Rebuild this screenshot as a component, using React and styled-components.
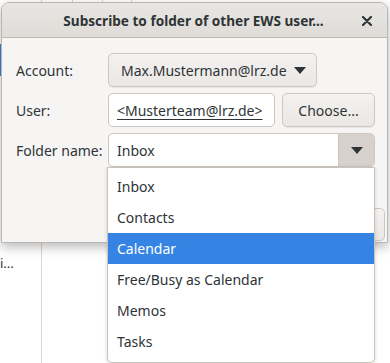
import styled, { createGlobalStyle } from "styled-components"

const GlobalStyle = createGlobalStyle`
    html, body {
        margin: 0;
        padding: 0;
        background: #ffffff;
    }
    * {
        box-sizing: border-box;
    }
`

const Desktop = styled.div`
    position: relative;
    width: 390px;
    height: 363px;
    overflow: hidden;
    background: #ffffff;
    font-family: "Noto Sans", "DejaVu Sans", sans-serif;
    font-size: 14px;
    color: #2e3436;
`

const BackApp = styled.div`
    display: flex;
    height: 100%;
`

const Sidebar = styled.div`
    width: 42px;
    flex-shrink: 0;
    border-right: 1px solid #d8d4d0;
    display: flex;
    flex-direction: column;
`

const SideRow = styled.div`
    height: ${props => props.$h}px;
    background: ${props => props.$selected ? '#3584e4' : 'transparent'};
    font-size: 13px;
    line-height: ${props => props.$h}px;
    color: #2e3436;
    white-space: nowrap;
`

const BackMain = styled.div`
    flex-grow: 1;
    display: flex;
    flex-direction: column;
`

const HeaderCells = styled.div`
    display: flex;
    height: 12px;
`

const HeaderCell = styled.div`
    width: ${props => props.$w}px;
    border-right: 1px solid #d8d4d0;
`

const Window = styled.div`
    position: absolute;
    left: 1px;
    top: 2px;
    width: 387px;
    height: 241px;
    display: flex;
    flex-direction: column;
    background: #f6f5f4;
    border: 1px solid #bdb6b0;
    border-radius: 8px 8px 0 0;
    box-shadow: 0 4px 12px rgba(0, 0, 0, 0.28);
`

const TitleBar = styled.div`
    position: relative;
    height: 35px;
    flex-shrink: 0;
    display: flex;
    align-items: center;
    justify-content: center;
    background: linear-gradient(#e8e6e3, #dfdcd8);
    border-bottom: 1px solid #bfb8b1;
    border-radius: 7px 7px 0 0;
`

const Title = styled.h1`
    margin: 0 0 0 -2px;
    font-size: 13.6px;
    font-weight: bold;
    color: #2e3436;
`

const CloseButton = styled.button`
    position: absolute;
    right: 10px;
    top: 8px;
    width: 20px;
    height: 20px;
    padding: 0;
    border: none;
    background: none;
    display: flex;
    align-items: center;
    justify-content: center;
`

const Body = styled.div`
    flex-grow: 1;
    display: flex;
    flex-direction: column;
    padding: 15px 12px 0 14px;
`

const Form = styled.div`
    display: grid;
    grid-template-columns: 84px 1fr;
    column-gap: 8px;
    row-gap: 6px;
    grid-auto-rows: 34px;
    align-items: center;
`

const Label = styled.label`
    white-space: nowrap;
    color: #2e3436;
`

const ComboButton = styled.button`
    justify-self: start;
    height: 34px;
    display: flex;
    align-items: center;
    gap: 7px;
    padding: 0 10px 0 12px;
    font: inherit;
    color: #2e3436;
    background: linear-gradient(#f4f2f1, #eae7e4);
    border: 1px solid #cdc7c2;
    border-radius: 5px;
    box-shadow: 0 1px 0 rgba(0, 0, 0, 0.05);
`

const FieldRow = styled.div`
    display: flex;
    gap: 7px;
    height: 34px;
`

const Entry = styled.div`
    flex-grow: 1;
    display: flex;
    align-items: center;
    padding: 0 8px;
    background: #ffffff;
    border: 1px solid #cdc7c2;
    border-radius: 5px;
    text-decoration: ${props => props.$underline ? 'underline' : 'none'};
    text-underline-offset: 3px;
    white-space: nowrap;
    overflow: hidden;
`

const PushButton = styled.button`
    width: ${props => props.$w}px;
    height: ${props => props.$h || 34}px;
    flex-shrink: 0;
    font: inherit;
    color: #2e3436;
    background: linear-gradient(#f4f2f1, #eae7e4);
    border: 1px solid #cdc7c2;
    border-radius: 5px;
    box-shadow: 0 1px 0 rgba(0, 0, 0, 0.05);
`

const ComboEntry = styled.div`
    position: relative;
    height: 34px;
    display: flex;
    background: #ffffff;
    border: 1px solid #cdc7c2;
    border-radius: 5px;
`

const ComboText = styled.div`
    flex-grow: 1;
    display: flex;
    align-items: center;
    padding: 0 8px;
`

const ArrowPart = styled.div`
    width: 36px;
    display: flex;
    align-items: center;
    justify-content: center;
    background: #d6d1cd;
    border-left: 1px solid #cdc7c2;
    border-radius: 0 4px 4px 0;
`

const Popup = styled.ul`
    position: absolute;
    left: -2px;
    top: 33px;
    width: 268px;
    margin: 0;
    padding: 3px 0 5px;
    list-style: none;
    background: #ffffff;
    border: 1px solid #c9c3bd;
    border-radius: 0 0 5px 5px;
    box-shadow: 0 1px 4px rgba(0, 0, 0, 0.15);
    z-index: 2;
`

const Item = styled.li`
    height: 31px;
    display: flex;
    align-items: center;
    padding-left: 9px;
    color: ${props => props.$active ? '#ffffff' : '#2e3436'};
    background: ${props => props.$active ? '#3584e4' : 'transparent'};
`

const ActionBar = styled.div`
    margin-top: auto;
    display: flex;
    justify-content: flex-end;
    padding: 0 0 1px 0;
    margin-right: -10px;
`

const Arrow = () => (
    <svg width="12" height="7" viewBox="0 0 12 7">
        <polygon points="0,0 12,0 6,7" fill="#2e3436" />
    </svg>
)

const CloseIcon = () => (
    <svg width="10" height="10" viewBox="0 0 10 10">
        <path d="M1 1 L9 9 M9 1 L1 9" stroke="#2e3436" strokeWidth="2.2" strokeLinecap="round" />
    </svg>
)

const folders = ['Inbox', 'Contacts', 'Calendar', 'Free/Busy as Calendar', 'Memos', 'Tasks']

const App = () => {
    return (
        <Desktop>
            <GlobalStyle />
            <BackApp>
                <Sidebar>
                    <SideRow $h={44} />
                    <SideRow $h={32} $selected />
                    <SideRow $h={176} />
                    <SideRow $h={22}>i...</SideRow>
                </Sidebar>
                <BackMain>
                    <HeaderCells>
                        <HeaderCell $w={31} />
                        <HeaderCell $w={30} />
                        <HeaderCell $w={29} />
                    </HeaderCells>
                </BackMain>
            </BackApp>

            <Window>
                <TitleBar>
                    <Title>Subscribe to folder of other EWS user...</Title>
                    <CloseButton><CloseIcon /></CloseButton>
                </TitleBar>
                <Body>
                    <Form>
                        <Label>Account:</Label>
                        <ComboButton>
                            Max.Mustermann@lrz.de
                            <Arrow />
                        </ComboButton>

                        <Label>User:</Label>
                        <FieldRow>
                            <Entry $underline>&lt;Musterteam@lrz.de&gt;</Entry>
                            <PushButton $w={93}>Choose...</PushButton>
                        </FieldRow>

                        <Label>Folder name:</Label>
                        <ComboEntry>
                            <ComboText>Inbox</ComboText>
                            <ArrowPart><Arrow /></ArrowPart>
                            <Popup>
                                {folders.map(f => (
                                    <Item key={f} $active={f === 'Calendar'}>{f}</Item>
                                ))}
                            </Popup>
                        </ComboEntry>
                    </Form>
                    <ActionBar>
                        <PushButton $w={80} $h={33}>OK</PushButton>
                    </ActionBar>
                </Body>
            </Window>
        </Desktop>
    )
}

export default App
